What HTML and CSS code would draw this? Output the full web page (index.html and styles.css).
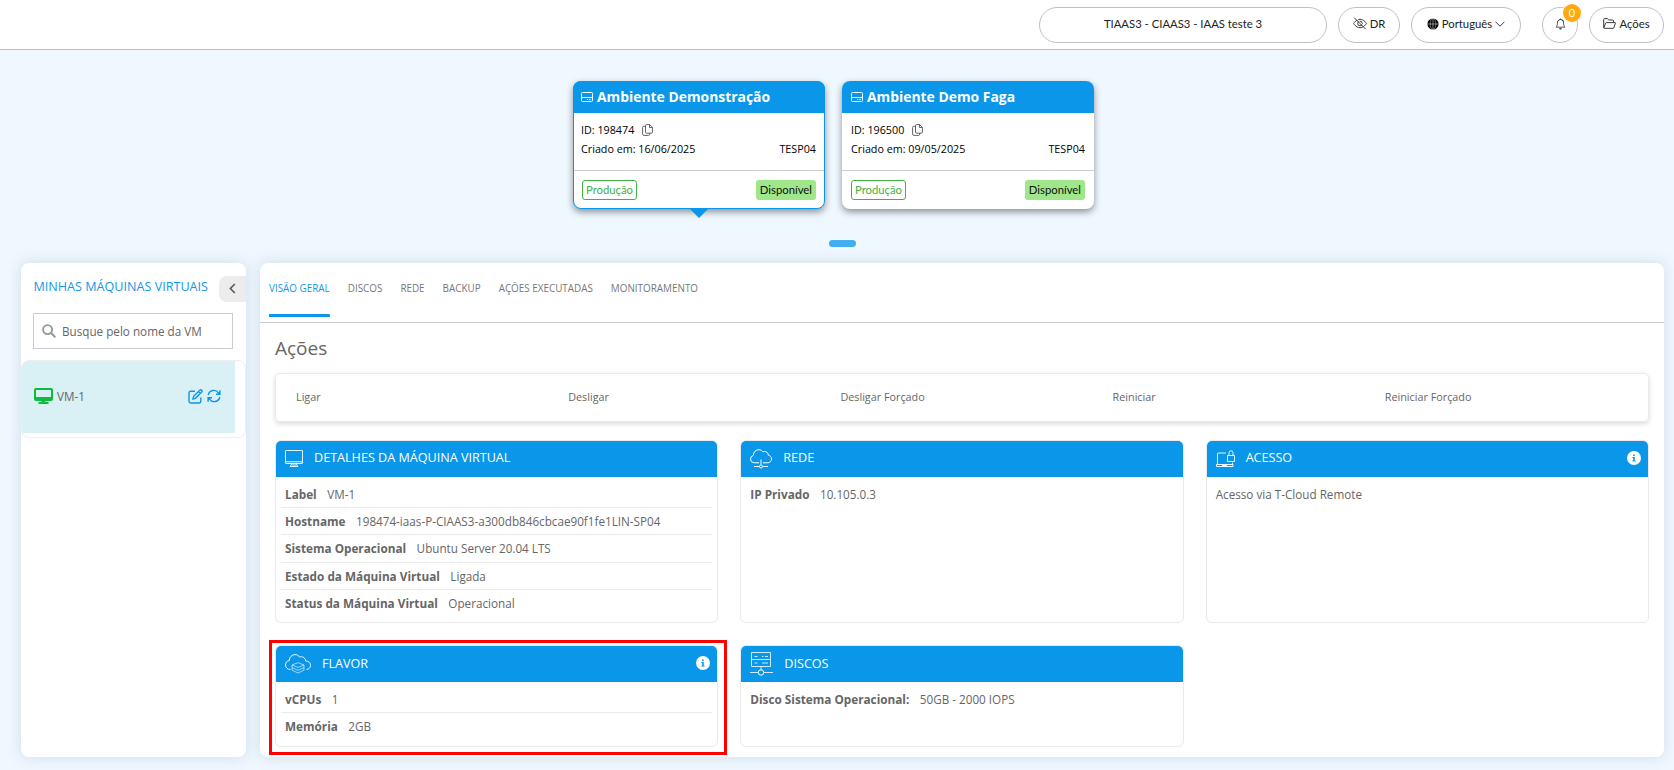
FILE: index.html
```html
<!DOCTYPE html>
<html lang="pt-BR">
<head>
<meta charset="utf-8">
<title>Ambiente Demonstração</title>
<link rel="stylesheet" href="styles.css">
</head>
<body>
<svg width="0" height="0" class="defs">
  <symbol id="hdd" viewBox="0 0 12 10"><path d="M1.500.5h9a1 1 0 0 1 1 1v7a1 1 0 0 1-1 1h-9a1 1 0 0 1-1-1v-7a1 1 0 0 1 1-1zM.5 5.500h11M6.200 7.500h1M8.300 7.500h1.400" fill="none" stroke="currentColor"/></symbol>
  <symbol id="copy" viewBox="0 0 11 12"><path d="M4.500.6h3.200l2.700 2.700v4.900a1 1 0 0 1-1 1H4.500a1 1 0 0 1-1-1V1.600a1 1 0 0 1 1-1zM7.500.6v2.900h2.900M3.500 2.300H1.800a1.200 1.200 0 0 0-1.200 1.200v6.600a1.300 1.300 0 0 0 1.300 1.300h4.600a1.200 1.200 0 0 0 1.200-1.200v-1" fill="none" stroke="currentColor" stroke-width=".9"/></symbol>
  <symbol id="info" viewBox="0 0 14 14"><circle cx="7" cy="7" r="7" fill="#fff"/><path d="M6.100 3.400h1.700V5H6.100zM5.400 6h2.400v3.400h.8v1.100H5.400V9.400h.8V7.100h-.8z" fill="#0a97ea"/></symbol>
</svg>

<header class="topbar">
  <button class="pill pill-client">TIAAS3 - CIAAS3 - IAAS teste 3</button>
  <button class="pill pill-dr">
    <svg width="14" height="13" viewBox="0 0 14 13" fill="none" stroke="#222" stroke-width=".9"><path d="M.6 6.500S3 2.300 7 2.300s6.400 4.200 6.400 4.200S11 10.700 7 10.700.6 6.500.6 6.500z"/><circle cx="7" cy="6.500" r="2.300"/><path d="M2.300.4l11 11" stroke="#fff"/><path d="M1.300.8l11.400 11.400"/></svg>
    <span>DR</span>
  </button>
  <button class="pill pill-lang">
    <svg width="12" height="12" viewBox="0 0 12 12"><circle cx="6" cy="6" r="5.600" fill="#000"/><path d="M6 .4v11.200M.4 6h11.200" stroke="#fff" stroke-width=".5"/><ellipse cx="6" cy="6" rx="2.800" ry="5.500" fill="none" stroke="#fff" stroke-width=".4"/></svg>
    <span>Português</span>
    <svg width="10" height="10" viewBox="0 0 10 10"><path d="M.6 2.800 5 7.200l4.400-4.400" fill="none" stroke="#222" stroke-width=".9"/></svg>
  </button>
  <button class="pill pill-bell">
    <svg width="11" height="12" viewBox="0 0 16 16" fill="currentColor"><path d="M8 16a2 2 0 0 0 2-2H6a2 2 0 0 0 2 2M8 1.918l-.797.161A4 4 0 0 0 4 6c0 .628-.134 2.197-.459 3.742-.160.767-.376 1.566-.663 2.258h10.244c-.287-.692-.502-1.490-.663-2.258C12.134 8.197 12 6.628 12 6a4 4 0 0 0-3.203-3.920zM14.220 12c.223.447.481.801.780 1H1c.299-.199.557-.553.780-1C2.680 10.200 3 6.880 3 6c0-2.420 1.720-4.440 4.005-4.901a1 1 0 1 1 1.990 0A5 5 0 0 1 13 6c0 .880.320 4.200 1.220 6"/></svg>
    <span class="badge">0</span>
  </button>
  <button class="pill pill-acoes">
    <svg width="13" height="11" viewBox="0 0 13 11" fill="none" stroke="#222" stroke-width=".9"><path d="M.7 9.500V1.400a.8.800 0 0 1 .8-.8h2.800l1.500 1.400h4a.8.800 0 0 1 .8.800v1.700M.9 9.700l1.700-4.600a.8.800 0 0 1 .7-.5h8.600a.5.500 0 0 1 .5.700l-1.600 4.500a.8.800 0 0 1-.7.500H1.500a.7.700 0 0 1-.7-.8"/></svg>
    <span>Ações</span>
  </button>
</header>

<section class="envs">
  <article class="env env-active">
    <h2 class="env-title"><svg width="12" height="10"><use href="#hdd"/></svg>Ambiente Demonstração</h2>
    <div class="env-body">
      <p class="env-line"><span>ID: 198474</span><svg width="11" height="12"><use href="#copy"/></svg></p>
      <p class="env-line env-split"><span>Criado em: 16/06/2025</span><span>TESP04</span></p>
    </div>
    <div class="env-foot"><span class="tag tag-prod">Produção</span><span class="tag tag-ok">Disponível</span></div>
  </article>
  <article class="env">
    <h2 class="env-title"><svg width="12" height="10"><use href="#hdd"/></svg>Ambiente Demo Faga</h2>
    <div class="env-body">
      <p class="env-line"><span>ID: 196500</span><svg width="11" height="12"><use href="#copy"/></svg></p>
      <p class="env-line env-split"><span>Criado em: 09/05/2025</span><span>TESP04</span></p>
    </div>
    <div class="env-foot"><span class="tag tag-prod">Produção</span><span class="tag tag-ok">Disponível</span></div>
  </article>
</section>
<div class="pager"></div>

<div class="layout">
  <aside class="sidebar">
    <div class="side-head">
      <h3 class="side-title">MINHAS MÁQUINAS VIRTUAIS</h3>
      <button class="collapse"><svg width="7" height="11" viewBox="0 0 7 11"><path d="M5.800 1 1.400 5.500 5.800 10" fill="none" stroke="#5c5c5c" stroke-width="1.700"/></svg></button>
    </div>
    <div class="search">
      <svg width="14" height="14" viewBox="0 0 14 14"><circle cx="5.600" cy="5.600" r="4.500" fill="none" stroke="#999" stroke-width="1.900"/><path d="m9 9 4.300 4.300" stroke="#999" stroke-width="2"/></svg>
      <span>Busque pelo nome da VM</span>
    </div>
    <div class="vm-list">
      <div class="vm">
        <svg width="19" height="16" viewBox="0 0 19 16"><path d="M2 0h15a2 2 0 0 1 2 2v9a2 2 0 0 1-2 2h-5.500v1H14.500v2H4.500v-2h3V13H2a2 2 0 0 1-2-2V2a2 2 0 0 1 2-2zm0 2v7h15V2z" fill="#0fbb3d" fill-rule="evenodd"/></svg>
        <span class="vm-name">VM-1</span>
        <svg width="15" height="15" viewBox="0 0 15 15" fill="none" stroke="#0a97ea" stroke-width="1.400"><path d="M7 2.200H2.700A1.700 1.700 0 0 0 1 3.900v8.400A1.700 1.700 0 0 0 2.700 14h8.400a1.700 1.700 0 0 0 1.700-1.700V8.500"/><path d="m5 10 .6-2.700 6.200-6.100a1.200 1.200 0 0 1 1.800 1.900L7.500 9.300zM10.400 2.500l2 2"/></svg>
        <svg class="refresh" width="14" height="14" viewBox="0 0 14 14" fill="none" stroke="#0a97ea" stroke-width="1.400"><path d="M1.200 6A5.700 5.700 0 0 1 11.500 3.900L13 5.200M12.800 8A5.700 5.700 0 0 1 2.500 10.100L1 8.800M12.900 1.200v4H9M1.100 12.800v-4H5"/></svg>
      </div>
    </div>
  </aside>

  <main class="main">
    <nav class="tabs">
      <a class="tab tab-on">VISÃO GERAL</a><a class="tab">DISCOS</a><a class="tab">REDE</a><a class="tab">BACKUP</a><a class="tab">AÇÕES EXECUTADAS</a><a class="tab">MONITORAMENTO</a>
    </nav>
    <div class="content">
      <h1 class="heading">Ações</h1>
      <div class="actions"><span>Ligar</span><span>Desligar</span><span>Desligar Forçado</span><span>Reiniciar</span><span>Reiniciar Forçado</span></div>
      <div class="cards">
        <section class="card">
          <header class="card-head">
            <svg width="18" height="18" viewBox="0 0 18 18" fill="none" stroke="#fff" stroke-width=".9"><path d="M1 .5h16a.5.500 0 0 1 .5.500v12a.5.500 0 0 1-.5.500H1a.5.500 0 0 1-.5-.5V1A.5.500 0 0 1 1 .5zM.5 11.800h17M7 13.500 5 16.500h8l-2-3M6.500 15h5"/></svg>
            <h4 class="t-vm">DETALHES DA MÁQUINA VIRTUAL</h4>
          </header>
          <dl class="rows">
            <div><dt>Label</dt><dd>VM-1</dd></div>
            <div><dt>Hostname</dt><dd>198474-iaas-P-CIAAS3-a300db846cbcae90f1fe1LIN-SP04</dd></div>
            <div><dt>Sistema Operacional</dt><dd>Ubuntu Server 20.04 LTS</dd></div>
            <div><dt>Estado da Máquina Virtual</dt><dd>Ligada</dd></div>
            <div><dt>Status da Máquina Virtual</dt><dd>Operacional</dd></div>
          </dl>
        </section>
        <section class="card">
          <header class="card-head">
            <svg width="22" height="20" viewBox="0 0 22 20" fill="none" stroke="#fff"><path d="M9 13.800H4.300A3.900 3.900 0 0 1 .5 10a3.900 3.900 0 0 1 2.800-3.600C3.500 3 5.800.7 8.800.7c2 0 3.400.9 4.200 2.200 2-1 5 0 5.300 3.200 2 .4 3.200 2 3.200 3.900 0 2-1.600 3.800-3.800 3.800H13M11 10.500v5M4 17.500h5M13 17.500h5"/><circle cx="11" cy="17.500" r="1.500"/></svg>
            <h4 class="t-rede">REDE</h4>
          </header>
          <dl class="rows"><div><dt>IP Privado</dt><dd>10.105.0.3</dd></div></dl>
        </section>
        <section class="card">
          <header class="card-head">
            <svg width="19" height="18" viewBox="0 0 19 18" fill="none" stroke="#fff" stroke-width=".9"><path d="M10 3H2.500a1 1 0 0 0-1 1v10M.5 14.500h16.500v2h-16.500zM6 15.500h5M16.500 12.500v2M11.500 5.500h7v6h-7zM13 5.500V2.800a2 2 0 0 1 4 0v2.700"/></svg>
            <h4 class="t-acesso">ACESSO</h4>
            <svg class="card-info" width="14" height="14"><use href="#info"/></svg>
          </header>
          <dl class="rows"><div><dd>Acesso via T-Cloud Remote</dd></div></dl>
        </section>
        <section class="card card-marked">
          <header class="card-head">
            <svg width="26" height="20" viewBox="0 0 26 20" fill="none" stroke="#fff" stroke-width=".9"><path d="M5.500 15.500C2.500 15.500.5 13.500.5 11s1.700-4.200 3.800-4.500C4.300 3 7 .6 10 .6c2.200 0 3.700 1 4.600 2.500 2.600-1.200 6 .6 6 3.900 2.800-.1 4.900 1.700 4.900 4.300 0 2.200-1.600 4-4 4.200"/><path d="m7 11 6-2.300 6 2.300-6 2.500zM7 13.600l6 2.700 6-2.700M7 16.200l6 2.800 6-2.800M7 11v5.200M19 11v5.200" stroke-width=".6"/></svg>
            <h4 class="t-flavor">FLAVOR</h4>
            <svg class="card-info" width="14" height="14"><use href="#info"/></svg>
          </header>
          <dl class="rows"><div><dt>vCPUs</dt><dd>1</dd></div><div><dt>Memória</dt><dd>2GB</dd></div></dl>
        </section>
        <section class="card">
          <header class="card-head">
            <svg width="23" height="24" viewBox="0 0 23 24" fill="none" stroke="#fff"><path d="M1.500.5h19v14h-19zM1.500 7.500h19M4.500 4.500h3M12 4.500h1.500M15 4.500h3M4.500 11h3M12 11h6M11 14.500v3.500M0 20.500h8M14 20.500h9" stroke-width=".8"/><circle cx="11" cy="20.500" r="2.700"/></svg>
            <h4 class="t-discos">DISCOS</h4>
          </header>
          <dl class="rows"><div><dt>Disco Sistema Operacional:</dt><dd>50GB - 2000 IOPS</dd></div></dl>
        </section>
      </div>
    </div>
  </main>
</div>
</body>
</html>
```
FILE: styles.css
```css
* { box-sizing: border-box; margin: 0; padding: 0; }
body { height: 770px; overflow: hidden; background: #eff7ff; color: #000; font-family: "Open Sans", sans-serif; font-size: 12px; }
svg { flex: none; display: block; }
.defs { position: absolute; }
button { font: inherit; color: inherit; border: 0; }

.topbar { height: 50px; display: flex; justify-content: flex-end; align-items: flex-start; padding: 7px 10px 0 0; background: #fff; border-bottom: 1px solid #b9bcc9; font-family: Lato, sans-serif; font-size: 11.300px; }
.pill { height: 36px; display: flex; align-items: center; justify-content: center; gap: 2px; padding-bottom: 3px; background: #fff; border: 1px solid #bcc0c9; border-radius: 18px; color: #222; }
.pill-client { width: 288px; margin-right: 11px; }
.pill-dr { width: 62px; margin-right: 11px; gap: 3px; }
.pill-lang { width: 110px; margin-right: 21px; gap: 3px; }
.pill-bell { width: 36px; margin-right: 11px; position: relative; }
.pill-acoes { width: 75px; gap: 3px; }
.badge { position: absolute; top: -4px; right: -4px; width: 18px; height: 18px; border-radius: 50%; background: #ffa90f; color: #fff; font-size: 11px; line-height: 17px; text-align: center; }

.envs { display: flex; justify-content: center; gap: 17px; padding: 31px 7px 0 0; }
.env { position: relative; width: 252px; height: 128px; display: flex; flex-direction: column; background: #fff; border-radius: 8px; box-shadow: 0 3px 7px rgba(0,0,0,.42); padding: 0 1px; }
.env-active { border: 1px solid #0a97ea; padding: 0; }
.env-active::after { content: ""; position: absolute; left: 116px; top: 127px; border: 9px solid transparent; border-top-color: #0a97ea; border-bottom: 0; }
.env-title { height: 32px; display: flex; align-items: center; gap: 4px; margin: 0 -1px; padding: 0 0 1px 9px; background: #0a97ea; border-radius: 8px 8px 0 0; color: #fff; font-size: 13.900px; font-weight: 700; }
.env-active .env-title { margin: -1px -1px 0; padding-left: 8px; }
.env-body { height: 58px; margin: 0 -1px; padding: 7px 9px 0; border-bottom: 1px solid #c9ced9; font-size: 10.750px; }
.env-active .env-body { margin: 0; padding: 7px 8px 0 7px; }
.env-line { height: 19px; display: flex; align-items: center; gap: 8px; }
.env-line svg { color: #555; }
.env-split { justify-content: space-between; }
.env-foot { display: flex; justify-content: space-between; padding: 9px 8px 0; }
.tag { height: 20px; padding: 0 3px; border-radius: 3px; font: 11.300px/17px Lato, sans-serif; border: 1px solid transparent; }
.tag-prod { border-color: #43b244; color: #43b244; }
.tag-ok { background: #a0e68a; color: #111; }
.pager { width: 27px; height: 7px; margin: 31px auto 16px 829px; border-radius: 4px; background: #42adf0; }

.layout { display: flex; gap: 14px; padding: 0 10px 0 21px; }
.sidebar, .main { height: 494px; background: #fff; border-radius: 8px; box-shadow: 0 0 14px rgba(120,150,160,.25); }
.sidebar { flex: none; width: 225px; color: #666; }
.side-head { display: flex; justify-content: space-between; padding: 13px 0 11px 12.500px; }
.side-title { padding-top: 1px; color: #1597e8; font-size: 12.600px; font-weight: 400; line-height: 20px; white-space: nowrap; }
.collapse { width: 27px; height: 26px; display: flex; align-items: center; justify-content: center; padding-bottom: 2px; background: #ececec; border-radius: 8px 0 0 8px; }
.search { width: 200px; height: 36px; margin: 0 12px 11px; display: flex; align-items: center; gap: 6px; padding-left: 8px; border: 1px solid #c9ccd6; color: #666; font-size: 11.700px; }
.vm-list { height: 78px; border: 1px solid #eee; border-radius: 8px; overflow: hidden; }
.vm { width: 213px; height: 72px; display: flex; align-items: center; padding: 0 14px 2px 12px; background: #d9f0f5; }
.vm-name { flex: 1; margin-left: 4px; font-size: 11.700px; }
.refresh { margin-left: 4px; }

.main { flex: 1; min-width: 0; }
.tabs { height: 60px; display: flex; gap: 18px; padding: 0 9px; border-bottom: 1px solid #c9ccd6; }
.tab { height: 54px; padding-top: 18px; font-size: 9.900px; line-height: 14px; color: #777; }
.tab-on { color: #1597e8; background: linear-gradient(#0a97ea, #0a97ea) bottom / 100% 3px no-repeat; }
.content { padding: 12px 15px 0; color: #666; }
.heading { height: 38px; font-size: 19px; font-weight: 400; line-height: 26px; }
.actions { height: 49px; display: grid; grid-template-columns: repeat(4, 272.200px) auto; align-items: center; padding: 0 0 2px 20px; border: 1px solid #eaeaea; border-radius: 5px; box-shadow: 0 2px 5px rgba(0,0,0,.15); font-size: 10.800px; }
.cards { display: grid; grid-template-columns: repeat(3, 1fr); grid-template-rows: 183px 102px; gap: 22px; margin-top: 18px; }
.card { position: relative; border: 1px solid #eaeaea; border-radius: 6px; }
.card-head { height: 36px; display: flex; align-items: center; padding: 0 7px 0 9px; background: #0a97ea; border-radius: 5px 5px 0 0; color: #fff; }
.card-head h4 { margin-left: 11px; padding-bottom: 3px; font-size: 12.600px; font-weight: 400; }
.card-head .t-flavor, .card-head .t-discos { padding-bottom: 1px; }
.card-info { margin-left: auto; margin-bottom: 2px; }
.rows { padding: 3.500px 5px 0; }
.rows div { height: 27.400px; display: flex; align-items: center; gap: 10.500px; padding-left: 4px; border-bottom: 1px solid #eaeaea; font-size: 11.700px; }
.rows div:last-child { border-bottom: 0; padding-bottom: 1px; }
.rows dt { font-size: 11.750px; font-weight: 700; }
.card-marked::after { content: ""; position: absolute; left: -7px; top: -6px; width: 452px; height: 109px; border: 3px solid #f00; }
```
